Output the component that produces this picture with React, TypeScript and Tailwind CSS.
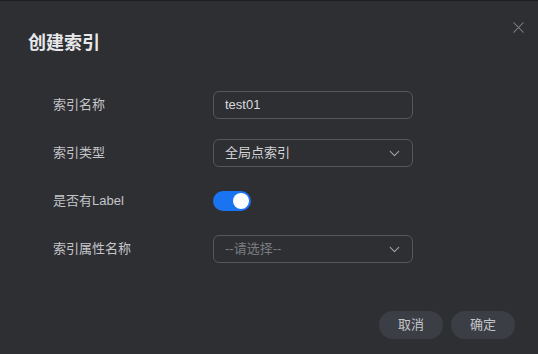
import { X, ChevronDown } from "lucide-react";

const font = { fontFamily: '"Liberation Sans", "Noto Sans CJK SC", sans-serif' };

function Row({ label, children }: { label: string; children: React.ReactNode }) {
  return (
    <div className="flex h-[28px] items-center">
      <div className="w-[160px] text-[13px] text-[#c4c5c9]">{label}</div>
      {children}
    </div>
  );
}

function SelectBox({ value, placeholder }: { value?: string; placeholder?: string }) {
  return (
    <div className="flex h-[28px] w-[200px] items-center justify-between rounded-[6px] border border-[#55575d] pl-[11px] pr-[9px]">
      {value ? (
        <span className="text-[13px] text-[#d2d3d6]">{value}</span>
      ) : (
        <span className="text-[13px] text-[#7b7d82]">{placeholder}</span>
      )}
      <ChevronDown size={17} strokeWidth={1.5} className="text-[#a3a5a9]" />
    </div>
  );
}

export default function App() {
  return (
    <div
      className="relative h-[354px] w-[538px] overflow-hidden border-t border-[#1d1e21] bg-[#2e2f33]"
      style={font}
    >
      <button className="absolute right-[10px] top-[17px] text-[#85878b]">
        <X size={19} strokeWidth={1.3} />
      </button>

      <h1 className="pl-[28px] pt-[30px] text-[18px] font-bold leading-[24px] text-[#e8e8ea]">
        创建索引
      </h1>

      <div className="mt-[36px] flex flex-col gap-[20px] pl-[53px]">
        <Row label="索引名称">
          <div className="flex h-[28px] w-[200px] items-center rounded-[6px] border border-[#55575d] pl-[11px] text-[13px] text-[#d8d9dc]">
            test01
          </div>
        </Row>
        <Row label="索引类型">
          <SelectBox value="全局点索引" />
        </Row>
        <Row label="是否有Label">
          <div className="flex h-[20px] w-[38px] items-center justify-end rounded-full bg-[#1a74f2] pr-[2px]">
            <div className="h-[16px] w-[16px] rounded-full bg-white" />
          </div>
        </Row>
        <Row label="索引属性名称">
          <SelectBox placeholder="--请选择--" />
        </Row>
      </div>

      <div className="mt-[48px] flex justify-end gap-[8px] pr-[23px]">
        <button className="h-[28px] w-[64px] rounded-full bg-[#3c3e45] text-[13px] text-[#c4c5c9]">
          取消
        </button>
        <button className="h-[28px] w-[64px] rounded-full bg-[#3c3e45] text-[13px] text-[#c4c5c9]">
          确定
        </button>
      </div>
    </div>
  );
}
